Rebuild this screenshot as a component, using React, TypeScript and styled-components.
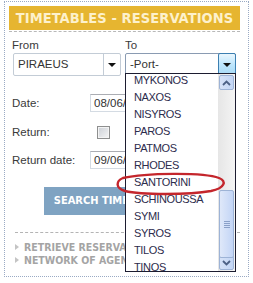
import styled, { createGlobalStyle } from "styled-components";

const ports = [
  "MYKONOS",
  "NAXOS",
  "NISYROS",
  "PAROS",
  "PATMOS",
  "RHODES",
  "SANTORINI",
  "SCHINOUSSA",
  "SYMI",
  "SYROS",
  "TILOS",
  "TINOS",
];

const GlobalStyle = createGlobalStyle`
  html, body {
    margin: 0;
    padding: 0;
    background: #ffffff;
  }
  body {
    font-family: "Liberation Sans", Arial, sans-serif;
  }
`;

const narrow = `"Liberation Sans Narrow", "DejaVu Sans Condensed", "Liberation Sans", sans-serif`;

export default function App() {
  return (
    <>
      <GlobalStyle />
      <Panel>
        <HeaderWrap>
          <Header>TIMETABLES - RESERVATIONS</Header>
        </HeaderWrap>

        <Route>
          <Field>
            <FieldLabel>From</FieldLabel>
            <Select>
              <SelectValue>PIRAEUS</SelectValue>
              <SelectButton>
                <Arrow />
              </SelectButton>
            </Select>
          </Field>
          <Field>
            <FieldLabel>To</FieldLabel>
            <Select $open>
              <SelectValue>-Port-</SelectValue>
              <SelectButton $open>
                <Arrow />
              </SelectButton>
            </Select>
          </Field>
        </Route>

        <Row $gap={18}>
          <RowLabel>Date:</RowLabel>
          <TextBox>08/06/2009</TextBox>
        </Row>
        <Row $gap={11}>
          <RowLabel>Return:</RowLabel>
          <CheckBox />
        </Row>
        <Row $gap={10}>
          <RowLabel>Return date:</RowLabel>
          <TextBox>09/06/2009</TextBox>
        </Row>

        <SearchButton>SEARCH TIMETABLES</SearchButton>

        <Links>
          <LinkItem>RETRIEVE RESERVATION</LinkItem>
          <LinkItem>NETWORK OF AGENTS</LinkItem>
        </Links>

        <PortList>
          <Options>
            {ports.map((p) => (
              <Option key={p}>{p}</Option>
            ))}
          </Options>
          <ScrollBar>
            <ScrollButton>
              <Chevron viewBox="0 0 9 6">
                <path d="M1 5 L4.5 1.5 L8 5" />
              </Chevron>
            </ScrollButton>
            <Track>
              <Thumb>
                <Grip />
                <Grip />
                <Grip />
                <Grip />
              </Thumb>
            </Track>
            <ScrollButton>
              <Chevron viewBox="0 0 9 6">
                <path d="M1 1 L4.5 4.5 L8 1" />
              </Chevron>
            </ScrollButton>
          </ScrollBar>
        </PortList>

        <Marker viewBox="0 0 112 24">
          <path d="M8 6 C 30 1, 88 0, 104 6 C 112 9, 110 16, 96 19 C 74 23, 26 23, 10 19 C 0 16, 1 9, 8 6 Z" />
        </Marker>
      </Panel>
    </>
  );
}

const Panel = styled.div`
  position: relative;
  box-sizing: border-box;
  margin: 1px 0 0 4px;
  width: 245px;
  height: 276px;
  border: 1px dotted #9aaac4;
  padding: 4px 8px 0 4px;
`;

const HeaderWrap = styled.div`
  padding-bottom: 1px;
  border-bottom: 1px dashed #b8b8b8;
`;

const Header = styled.div`
  height: 24px;
  background: #e6b530;
  color: #fdf1cc;
  font-family: ${narrow};
  font-weight: 700;
  font-size: 14.5px;
  line-height: 24px;
  text-align: center;
  letter-spacing: 0.1px;
`;

const Route = styled.div`
  display: grid;
  grid-template-columns: 109px 111px;
  column-gap: 4px;
  margin-top: 6px;
  padding-left: 3px;
`;

const Field = styled.div`
  display: flex;
  flex-direction: column;
`;

const FieldLabel = styled.div`
  font-size: 11.5px;
  color: #3a3a3a;
  line-height: 14px;
  height: 15px;
`;

const Select = styled.div<{ $open?: boolean }>`
  display: flex;
  height: 21px;
  margin-left: ${(p) => (p.$open ? "0" : "1px")};
  border: 1px solid ${(p) => (p.$open ? "#8a9bb2" : "#c3ccd6")};
  border-radius: 2px;
  background: #ffffff;
`;

const SelectValue = styled.div`
  flex: 1;
  padding-left: 4px;
  font-size: 11.5px;
  line-height: 21px;
  color: #333333;
`;

const SelectButton = styled.div<{ $open?: boolean }>`
  width: 16px;
  display: flex;
  align-items: center;
  justify-content: center;
  border-left: 1px solid ${(p) => (p.$open ? "#3c7fb1" : "#c3ccd6")};
  ${(p) =>
    p.$open &&
    `
    margin: -1px -1px -1px 0;
    border: 1px solid #3c7fb1;
    border-radius: 2px;
    background: linear-gradient(#eaf6fd, #bee6fd 50%, #a7d9f5);
  `}
`;

const Arrow = styled.span`
  width: 0;
  height: 0;
  border-left: 4px solid transparent;
  border-right: 4px solid transparent;
  border-top: 4px solid #111111;
`;

const Row = styled.div<{ $gap: number }>`
  display: flex;
  align-items: center;
  height: 18px;
  margin-top: ${(p) => p.$gap}px;
  padding-left: 3px;
`;

const RowLabel = styled.div`
  width: 78px;
  font-size: 11.5px;
  color: #3a3a3a;
`;

const TextBox = styled.div`
  box-sizing: border-box;
  width: 70px;
  height: 18px;
  border: 1px solid #d4dbe3;
  border-top-color: #abadb3;
  padding-left: 3px;
  font-size: 11.5px;
  line-height: 16px;
  color: #333333;
`;

const CheckBox = styled.div`
  box-sizing: border-box;
  width: 13px;
  height: 13px;
  margin-left: 7px;
  border: 1px solid #8e8f8f;
  background: linear-gradient(135deg, #cbcfd5, #f6f6f6);
  box-shadow: inset 0 0 0 1px #f4f4f4;
`;

const SearchButton = styled.div`
  width: 136px;
  height: 28px;
  margin: 18px 0 0 35px;
  background: #7fa3c2;
  color: #ffffff;
  font-family: ${narrow};
  font-weight: 700;
  font-size: 11px;
  line-height: 28px;
  text-align: center;
`;

const Links = styled.div`
  margin: 17px 0 0 6px;
  padding-top: 7px;
  border-top: 1px dashed #b4b4b4;
`;

const LinkItem = styled.div`
  display: flex;
  align-items: center;
  gap: 5px;
  height: 13px;
  font-family: ${narrow};
  font-weight: 700;
  font-size: 10.5px;
  color: #a4a4a4;
  white-space: nowrap;

  &::before {
    content: "";
    border-top: 3px solid transparent;
    border-bottom: 3px solid transparent;
    border-left: 4px solid #c4c4c4;
  }
`;

const PortList = styled.div`
  position: absolute;
  left: 120px;
  top: 71px;
  box-sizing: border-box;
  width: 111px;
  height: 199px;
  display: flex;
  border: 1px solid #1c1c30;
  background: #ffffff;
  overflow: hidden;
`;

const Options = styled.div`
  flex: 1;
  margin-top: -2px;
`;

const Option = styled.div`
  height: 17px;
  padding-left: 8px;
  font-size: 11px;
  letter-spacing: -0.35px;
  line-height: 17px;
  color: #2c2c4c;
`;

const ScrollBar = styled.div`
  width: 15px;
  display: flex;
  flex-direction: column;
  background: linear-gradient(90deg, #e6e6e6, #f4f4f4);
  padding: 0 1px;
`;

const ScrollButton = styled.div`
  height: 15px;
  display: flex;
  align-items: center;
  justify-content: center;
  box-sizing: border-box;
  border: 1px solid #9db3d6;
  border-radius: 2px;
  background: linear-gradient(90deg, #d6e2f7, #c2d5f5);
  margin: 1px 0;
`;

const Chevron = styled.svg`
  width: 9px;
  height: 6px;
  fill: none;
  stroke: #4d6185;
  stroke-width: 1.8;
`;

const Track = styled.div`
  flex: 1;
  position: relative;
`;

const Thumb = styled.div`
  position: absolute;
  left: 0;
  right: 0;
  top: 99px;
  height: 68px;
  box-sizing: border-box;
  border: 1px solid #9db3d6;
  border-radius: 2px;
  background: linear-gradient(90deg, #dfe8f9, #c3d5f6);
  display: flex;
  flex-direction: column;
  align-items: center;
  justify-content: center;
  gap: 1px;
`;

const Grip = styled.span`
  width: 6px;
  height: 1px;
  background: #8aa0c8;
`;

const Marker = styled.svg`
  position: absolute;
  left: 110px;
  top: 170px;
  width: 112px;
  height: 24px;
  fill: none;
  stroke: #c4262c;
  stroke-width: 2.4;
  overflow: visible;
`;
